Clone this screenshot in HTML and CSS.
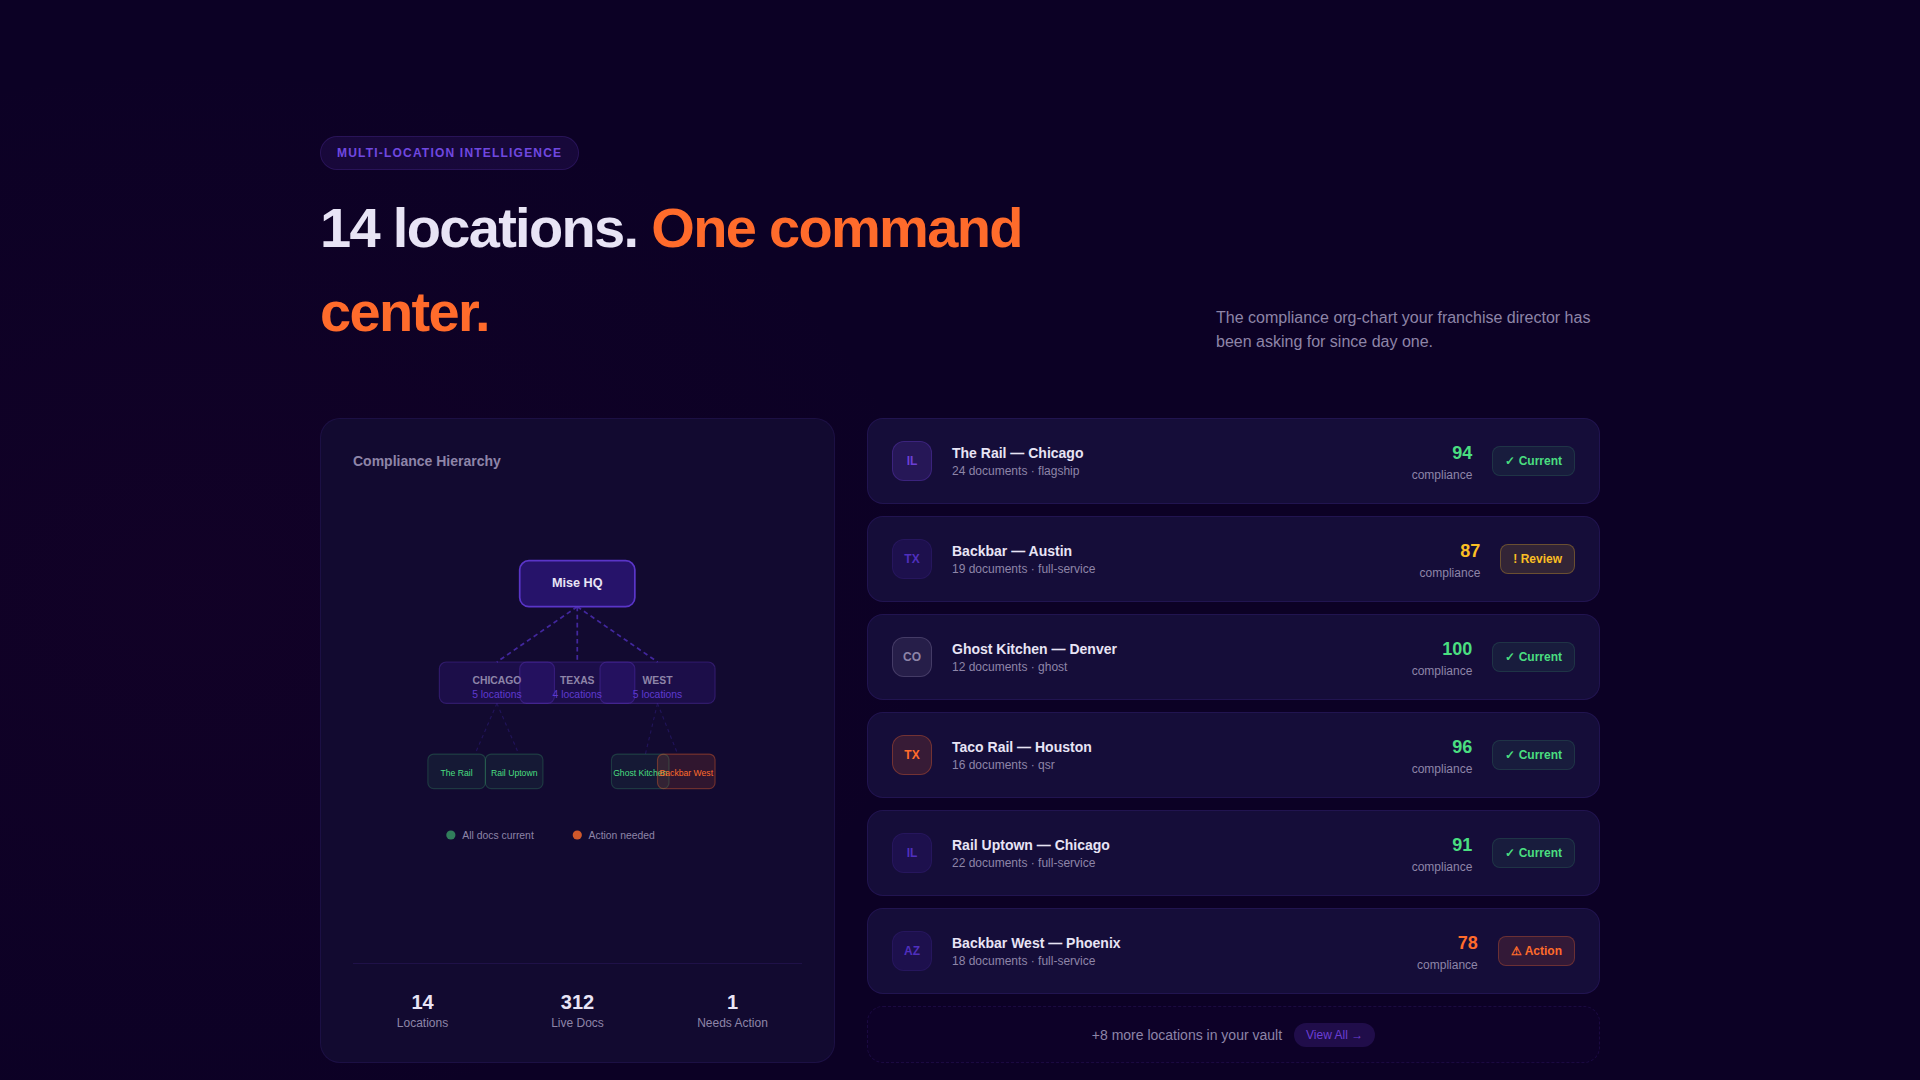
FILE: index.html
```html
<!DOCTYPE html>
<html lang="en">
<head>
<meta charset="utf-8">
<title>Multi-location intelligence</title>
<link rel="stylesheet" href="styles.css">
</head>
<body>
<main class="section">
  <span class="eyebrow">MULTI-LOCATION INTELLIGENCE</span>
  <header class="head">
    <h1 class="title">14 locations. <em>One command center.</em></h1>
    <p class="lede">The compliance org-chart your franchise director has been asking for since day one.</p>
  </header>
  <div class="columns">
    <section class="panel">
      <h2 class="panel-title">Compliance Hierarchy</h2>
      <div class="chart">
        <svg class="tree" viewBox="0 1.2 390 310">
          <g class="link-hi">
            <path d="M194.8 60L125 108"/>
            <path d="M194.8 60V108"/>
            <path d="M194.8 60L264.5 108"/>
          </g>
          <g class="link-lo">
            <path d="M125 144L106 188"/>
            <path d="M125 144L144 188"/>
            <path d="M264.5 144L254 188"/>
            <path d="M264.5 144L282 188"/>
          </g>
          <rect class="n-hq" x="144.8" y="20" width="100" height="40" rx="8"/>
          <text class="t-hq" x="194.8" y="43.2">Mise HQ</text>
          <rect class="n-mid" x="75" y="108" width="100" height="36" rx="6"/>
          <text class="t-mid" x="125" y="127.5">CHICAGO</text>
          <text class="t-sub" x="125" y="139">5 locations</text>
          <rect class="n-mid" x="144.8" y="108" width="100" height="36" rx="6"/>
          <text class="t-mid" x="194.8" y="127.5">TEXAS</text>
          <text class="t-sub" x="194.8" y="139">4 locations</text>
          <rect class="n-mid" x="214.5" y="108" width="100" height="36" rx="6"/>
          <text class="t-mid" x="264.5" y="127.5">WEST</text>
          <text class="t-sub" x="264.5" y="139">5 locations</text>
          <rect class="n-ok" x="65" y="188" width="50" height="30" rx="5"/>
          <text class="t-ok" x="90" y="207">The Rail</text>
          <rect class="n-ok" x="115" y="188" width="50" height="30" rx="5"/>
          <text class="t-ok" x="140" y="207">Rail Uptown</text>
          <rect class="n-ok" x="224.5" y="188" width="50" height="30" rx="5"/>
          <text class="t-ok" x="249.5" y="207">Ghost Kitchen</text>
          <rect class="n-bad" x="264.5" y="188" width="50" height="30" rx="5"/>
          <text class="t-bad" x="289.5" y="207">Backbar West</text>
          <circle class="d-ok" cx="85" cy="258.3" r="4"/>
          <text class="t-leg" x="95" y="261.5">All docs current</text>
          <circle class="d-bad" cx="194.8" cy="258.3" r="4"/>
          <text class="t-leg" x="204.6" y="261.5">Action needed</text>
        </svg>
      </div>
      <div class="stats">
        <div class="stat"><b>14</b><span>Locations</span></div>
        <div class="stat"><b>312</b><span>Live Docs</span></div>
        <div class="stat"><b>1</b><span>Needs Action</span></div>
      </div>
    </section>
    <section class="list">
      <article class="row">
        <div class="tag tag-hi">IL</div>
        <div class="info"><h3>The Rail — Chicago</h3><p>24 documents · flagship</p></div>
        <div class="score ok"><b>94</b><span>compliance</span></div>
        <div class="pill pill-ok">✓ Current</div>
      </article>
      <article class="row">
        <div class="tag tag-lo">TX</div>
        <div class="info"><h3>Backbar — Austin</h3><p>19 documents · full-service</p></div>
        <div class="score warn"><b>87</b><span>compliance</span></div>
        <div class="pill pill-warn">! Review</div>
      </article>
      <article class="row">
        <div class="tag tag-grey">CO</div>
        <div class="info"><h3>Ghost Kitchen — Denver</h3><p>12 documents · ghost</p></div>
        <div class="score ok"><b>100</b><span>compliance</span></div>
        <div class="pill pill-ok">✓ Current</div>
      </article>
      <article class="row">
        <div class="tag tag-hot">TX</div>
        <div class="info"><h3>Taco Rail — Houston</h3><p>16 documents · qsr</p></div>
        <div class="score ok"><b>96</b><span>compliance</span></div>
        <div class="pill pill-ok">✓ Current</div>
      </article>
      <article class="row">
        <div class="tag tag-lo">IL</div>
        <div class="info"><h3>Rail Uptown — Chicago</h3><p>22 documents · full-service</p></div>
        <div class="score ok"><b>91</b><span>compliance</span></div>
        <div class="pill pill-ok">✓ Current</div>
      </article>
      <article class="row">
        <div class="tag tag-lo">AZ</div>
        <div class="info"><h3>Backbar West — Phoenix</h3><p>18 documents · full-service</p></div>
        <div class="score bad"><b>78</b><span>compliance</span></div>
        <div class="pill pill-bad">⚠ Action</div>
      </article>
      <div class="more">
        <span class="more-text">+8 more locations in your vault</span>
        <a class="view-all">View All →</a>
      </div>
    </section>
  </div>
</main>
</body>
</html>
```
FILE: styles.css
```css
* { box-sizing: border-box; margin: 0; padding: 0; }
html, body { height: 100%; }
body {
  font-family: "Liberation Sans", Arial, sans-serif;
  font-size: 16px;
  line-height: 1.5;
  color: #e8e4f5;
  background-color: #0c0125;
  background-image: radial-gradient(ellipse 40% 50% at 10% 55%, rgba(120, 10, 70, 0.05), transparent);
  overflow: hidden;
}
.section { width: 1280px; margin: 0 auto; padding-top: 136px; }
.eyebrow {
  display: inline-block;
  padding: 7px 16px;
  font-size: 12px;
  line-height: 18px;
  font-weight: 700;
  letter-spacing: 0.1em;
  color: #7048e0;
  background: rgba(108, 63, 212, 0.12);
  border: 1px solid rgba(108, 63, 212, 0.2);
  border-radius: 100px;
  vertical-align: top;
}
.head { display: flex; justify-content: space-between; align-items: flex-end; margin-top: 16px; margin-bottom: 64px; }
.title { width: 760px; font-size: 56px; line-height: 84px; font-weight: 700; letter-spacing: -0.03em; }
.title em { font-style: normal; color: #ff6b2b; }
.lede { width: 384px; font-size: 16px; line-height: 24px; color: #8e85a8; }
.columns { display: grid; grid-template-columns: 515px 1fr; gap: 32px; }
.panel {
  display: flex; flex-direction: column;
  padding: 32px 32px 30px;
  background: #120a30;
  border: 1px solid rgba(108, 63, 212, 0.12);
  border-radius: 20px;
}
.panel-title { font-size: 14px; line-height: 21px; font-weight: 700; color: #8e85a8; }
.chart { flex: 1; display: flex; align-items: center; justify-content: center; }
.tree { display: block; width: 100%; overflow: visible; }
.link-hi path { fill: none; stroke: #42279e; stroke-width: 1.5; stroke-dasharray: 4 3; }
.link-lo path { fill: none; stroke: #21145a; stroke-width: 1; stroke-dasharray: 3 3; }
.n-hq { fill: #26136a; stroke: #5a35c8; stroke-width: 1.5; }
.n-mid { fill: rgba(90, 40, 220, 0.15); stroke: rgba(108, 63, 212, 0.3); stroke-width: 1; }
.n-ok { fill: rgba(74, 222, 128, 0.07); stroke: rgba(74, 222, 128, 0.2); stroke-width: 1; }
.n-bad { fill: rgba(255, 107, 43, 0.13); stroke: rgba(255, 107, 43, 0.35); stroke-width: 1; }
.tree text { text-anchor: middle; font-family: "Liberation Sans", Arial, sans-serif; }
.t-hq { font-size: 11px; font-weight: 700; fill: #e8e4f5; }
.t-mid { font-size: 9px; font-weight: 700; fill: #8e85a8; }
.t-sub { font-size: 9px; fill: #5f3ad0; }
.t-ok { font-size: 7.5px; fill: #4ade80; }
.t-bad { font-size: 7.5px; fill: #ff6b2b; }
.tree .t-leg { text-anchor: start; font-size: 9px; fill: #8e85a8; }
.d-ok { fill: #4ade80; opacity: 0.55; }
.d-bad { fill: #ff6b2b; opacity: 0.8; }
.stats { display: grid; grid-template-columns: repeat(3, 1fr); gap: 16px; padding-top: 26px; border-top: 1px solid rgba(108, 63, 212, 0.15); }
.stat { display: flex; flex-direction: column; align-items: center; }
.stat b { font-size: 20px; line-height: 24px; color: #e8e4f5; }
.stat span { font-size: 12px; line-height: 18px; color: #8e85a8; }
.list { display: flex; flex-direction: column; gap: 12px; }
.row {
  display: flex; align-items: center;
  height: 86px;
  padding: 0 24px;
  background: #150d39;
  border: 1px solid rgba(108, 63, 212, 0.15);
  border-radius: 16px;
}
.tag {
  flex: none;
  display: flex; align-items: center; justify-content: center;
  width: 40px; height: 40px;
  border-radius: 12px;
  font-size: 12px; font-weight: 700;
  border: 1px solid;
}
.tag-hi { color: #6c3fd4; background: rgba(108, 63, 212, 0.2); border-color: rgba(108, 63, 212, 0.3); }
.tag-lo { color: #4f2fbd; background: rgba(90, 40, 220, 0.12); border-color: rgba(108, 63, 212, 0.12); }
.tag-grey { color: #8e85a8; background: rgba(138, 128, 168, 0.15); border-color: rgba(138, 128, 168, 0.3); }
.tag-hot { color: #ff6b2b; background: rgba(255, 107, 43, 0.15); border-color: rgba(255, 107, 43, 0.3); }
.info { flex: 1; margin-left: 20px; padding-bottom: 2px; }
.info h3 { font-size: 14px; line-height: 21px; font-weight: 700; color: #e8e4f5; }
.info p { font-size: 12px; line-height: 14px; color: #8e85a8; }
.score { display: flex; flex-direction: column; align-items: flex-end; margin-right: 20px; }
.score b { font-size: 18px; line-height: 27px; }
.score span { font-size: 12px; line-height: 16px; color: #8e85a8; }
.ok b { color: #4ade80; }
.warn b { color: #fbbf24; }
.bad b { color: #ff6b2b; }
.pill { padding: 6px 12px; font-size: 12px; line-height: 16px; font-weight: 700; border: 1px solid; border-radius: 8px; }
.pill-ok { color: #4ade80; background: rgba(74, 222, 128, 0.07); border-color: rgba(74, 222, 128, 0.13); }
.pill-warn { color: #fbbf24; background: rgba(251, 191, 36, 0.13); border-color: rgba(251, 191, 36, 0.28); }
.pill-bad { color: #ff6b2b; background: rgba(255, 107, 43, 0.13); border-color: rgba(255, 107, 43, 0.28); }
.more {
  display: flex; align-items: center; justify-content: center; gap: 12px;
  height: 57px;
  border: 1px dashed rgba(108, 63, 212, 0.15);
  border-radius: 16px;
  background: rgba(108, 63, 212, 0.02);
  font-size: 14px; color: #8e85a8;
}
.more-text { padding-top: 2px; }
.view-all { padding: 3px 12px; font-size: 12px; line-height: 18px; color: #6c3fd4; background: rgba(108, 63, 212, 0.2); border-radius: 100px; }
```
